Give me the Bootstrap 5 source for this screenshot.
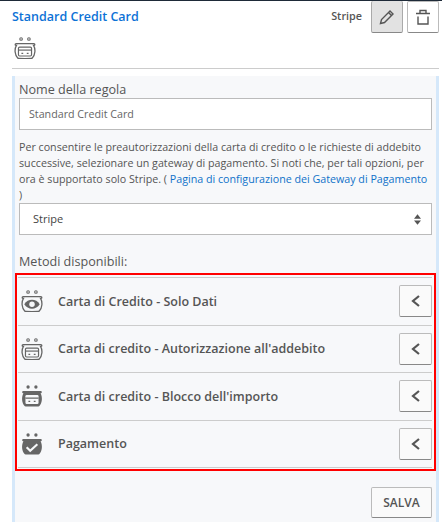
<!DOCTYPE html>
<html lang="it">
<head>
<meta charset="utf-8">
<title>Standard Credit Card</title>
<link href="https://cdn.jsdelivr.net/npm/bootstrap@5.3.0/dist/css/bootstrap.min.css" rel="stylesheet">
<style>
html,body{height:526px;overflow:hidden}
body{font-family:"Open Sans",sans-serif;color:#555;background:#fff;font-size:12px;border-top:1px solid #1e2a38;padding:0 3px 0 12px}
.rule-head{height:67px;border-bottom:1px solid #ccc;box-sizing:content-box}
.rule-title{color:#0d72d6;font-weight:600;font-size:12.5px;line-height:16px;padding-top:8px}
.gw-name{font-size:10.800px;font-weight:600;color:#555;margin-right:5px;margin-top:-1px}
.sq-btn{width:32px;height:32px;padding:0;background:#fff;border:1px solid #bbb;border-bottom-color:#888;border-radius:2px;display:flex;align-items:center;justify-content:center;color:#555}
.sq-btn.on{background:#e2e2e2;border-top:0;border-color:#aaa;border-bottom-color:#888}
.sq-btn.chev{background:#fafafa;width:33px}
.head-ico{display:block;margin:4px 0 0 2px}
.rule-panel{margin-top:7px;height:446px;background:#f7f8fa;border-left:3px solid #d5e8fa;border-right:3px solid #d5e8fa;padding:5px 4px 0}
.fld-label{font-size:12.600px;line-height:17px;color:#555;margin:0;display:block}
.rule-input,.rule-select{height:32px;border:1px solid #bbb;border-radius:0;font-size:10.700px;color:#666;padding:0 9px;box-shadow:none;background-color:#fff;font-family:inherit}
.rule-select{color:#444;padding-left:13px;font-size:11px;background-image:url("data:image/svg+xml,%3Csvg xmlns='http://www.w3.org/2000/svg' viewBox='0 0 8 12'%3E%3Cpath d='M4 0l4 5H0zM4 12L0 7h8z' fill='%23555'/%3E%3C/svg%3E");background-position:right 10px center;background-size:7px 11px}
.rule-help{font-size:10.700px;line-height:16px;color:#555;margin:9px 0 0}
.rule-help a{color:#0f72c9;text-decoration:none}
.methods-label{margin-top:18px}
.methods-box{margin:3px -4px 0;border:2px solid #f00;padding:2px 2px 1px 1px}
.method-row{height:47.500px;border-top:1px solid #ccc;padding:0 0 0 3px;display:flex;align-items:center}
.method-row:last-child{border-bottom:1px solid #ccc;height:48.500px}
.method-name{font-size:12.500px;font-weight:600;color:#555;margin-left:15px;flex-grow:1;padding-top:2px}
.save-btn{width:61px;height:31px;padding:0;background:#fafafa;border:1px solid #bbb;border-bottom-color:#888;border-radius:2px;font-size:12px;font-weight:600;color:#555}
</style>
</head>
<body>
<div class="rule-head">
  <div class="d-flex justify-content-between align-items-start">
    <div class="rule-title">Standard Credit Card</div>
    <div class="d-flex align-items-center gap-1">
      <span class="gw-name">Stripe</span>
      <button class="sq-btn on" type="button" aria-label="Modifica"><svg width="16" height="16" viewBox="0 0 16 16" fill="none" stroke="#555" stroke-width="1.400"><path d="M1.500 14.500l1-4L11 2l3 3-8.500 8.500z"/><path d="M9.500 3.500l3 3"/></svg></button>
      <button class="sq-btn" type="button" aria-label="Elimina"><svg width="16" height="16" viewBox="0 0 16 16" fill="none" stroke="#555" stroke-width="1.400"><path d="M1 4.500h14M5 4.500V1.500h6v3M3 7.500V15h10V7.500"/></svg></button>
    </div>
  </div>
  <svg class="head-ico" width="22" height="22" viewBox="2 1.500 18 18.500"><use href="#purse-card"/></svg>
</div>
<div class="rule-panel">
  <label class="fld-label" for="nome">Nome della regola</label>
  <input id="nome" class="form-control rule-input" value="Standard Credit Card">
  <p class="rule-help">Per consentire le preautorizzazioni della carta di credito o le richieste di addebito successive, selezionare un gateway di pagamento. Si noti che, per tali opzioni, per ora è supportato solo Stripe. ( <a href="#">Pagina di configurazione dei Gateway di Pagamento</a> )</p>
  <select class="form-select rule-select" aria-label="Gateway"><option>Stripe</option></select>
  <div class="fld-label methods-label">Metodi disponibili:</div>
  <div class="methods-box">
    <div class="method-row"><svg width="22" height="22" viewBox="2 1.500 18 18.500"><use href="#purse-eye"/></svg><span class="method-name">Carta di Credito - Solo Dati</span><button class="sq-btn chev" type="button" aria-label="Apri"><svg width="12" height="14" viewBox="0 0 12 14" fill="none" stroke="#555" stroke-width="2.200"><path d="M9 2L3 7l6 5"/></svg></button></div>
    <div class="method-row"><svg width="22" height="22" viewBox="2 1.500 18 18.500"><use href="#purse-card"/></svg><span class="method-name">Carta di credito - Autorizzazione all'addebito</span><button class="sq-btn chev" type="button" aria-label="Apri"><svg width="12" height="14" viewBox="0 0 12 14" fill="none" stroke="#555" stroke-width="2.200"><path d="M9 2L3 7l6 5"/></svg></button></div>
    <div class="method-row"><svg width="22" height="22" viewBox="2 1.500 18 18.500"><use href="#purse-solid"/></svg><span class="method-name">Carta di credito - Blocco dell'importo</span><button class="sq-btn chev" type="button" aria-label="Apri"><svg width="12" height="14" viewBox="0 0 12 14" fill="none" stroke="#555" stroke-width="2.200"><path d="M9 2L3 7l6 5"/></svg></button></div>
    <div class="method-row"><svg width="22" height="22" viewBox="2 1.500 18 18.500"><use href="#purse-check"/></svg><span class="method-name">Pagamento</span><button class="sq-btn chev" type="button" aria-label="Apri"><svg width="12" height="14" viewBox="0 0 12 14" fill="none" stroke="#555" stroke-width="2.200"><path d="M9 2L3 7l6 5"/></svg></button></div>
  </div>
  <div class="d-flex justify-content-end mt-3"><button class="save-btn" type="button">SALVA</button></div>
</div>
<svg width="0" height="0" class="d-none" aria-hidden="true">
  <defs>
    <g id="purse-base"><path d="M3.500 7h15c1 0 1 1.500 0 1.500h-.3c1.800 3 1.500 8.500-1.200 10.800-1 .5-11 .5-12 0C2.300 17 2 11.500 3.800 8.500h-.3c-1 0-1-1.500 0-1.500z" fill="none" stroke="#666" stroke-width="1.100"/></g>
    <g id="purse-card"><circle cx="7.700" cy="3.200" r="1.100" fill="none" stroke="#666" stroke-width=".9"/><circle cx="14.300" cy="3.200" r="1.100" fill="none" stroke="#666" stroke-width=".9"/><use href="#purse-base"/><rect x="5.500" y="10" width="11" height="7.500" rx="1" fill="none" stroke="#666" stroke-width="1"/><path d="M5.500 12.500h11" stroke="#666"/><path d="M8 15.200h1.500M12.500 15.200h1.500" stroke="#666"/></g>
    <g id="purse-eye"><circle cx="7.700" cy="3.200" r="1.100" fill="none" stroke="#666" stroke-width=".9"/><circle cx="14.300" cy="3.200" r="1.100" fill="none" stroke="#666" stroke-width=".9"/><use href="#purse-base"/><path d="M4.500 13.500c3-5 10-5 13 0-3 5-10 5-13 0z" fill="#666"/><circle cx="11" cy="13.500" r="2.300" fill="#f7f8fa"/></g>
    <g id="purse-solid"><circle cx="7.700" cy="3.200" r="1.400" fill="#666"/><circle cx="14.300" cy="3.200" r="1.400" fill="#666"/><path d="M3.500 6.500h15c1 0 1 2 0 2h-.3c1.800 3 1.500 8.500-1.200 10.800-1 .5-11 .5-12 0C2.300 17 2 11.500 3.800 8.500h-.3c-1 0-1-2 0-2z" fill="#666"/><rect x="5.500" y="10" width="11" height="7.500" rx="1" fill="#f7f8fa"/><path d="M5.500 12.500h11M8 15.200h1.500M12.500 15.200h1.500" stroke="#666"/></g>
    <g id="purse-check"><circle cx="7.700" cy="3.200" r="1.400" fill="#666"/><circle cx="14.300" cy="3.200" r="1.400" fill="#666"/><path d="M3.500 6.500h15c1 0 1 2 0 2h-.3c1.800 3 1.500 8.500-1.200 10.800-1 .5-11 .5-12 0C2.300 17 2 11.500 3.800 8.500h-.3c-1 0-1-2 0-2z" fill="#666"/><path d="M6.500 13.500l3 3 6-5.500" fill="none" stroke="#f7f8fa" stroke-width="1.800"/></g>
  </defs>
</svg>
</body>
</html>
